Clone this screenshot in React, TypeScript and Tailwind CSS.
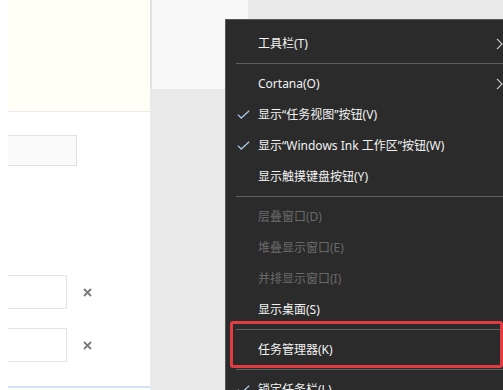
import React from "react";

const font = { fontFamily: '"Noto Sans", "Noto Sans CJK SC", sans-serif' };

function Check() {
  return (
    <svg width="13" height="9" viewBox="0 0 13 9" className="absolute left-[11px] top-[11px]">
      <polyline points="0.8,4.6 4.2,8 12.2,0.8" fill="none" stroke="#a9c7e6" strokeWidth="1.3" />
    </svg>
  );
}

function Chevron() {
  return (
    <svg width="7" height="12" viewBox="0 0 7 12" className="absolute left-[270px] top-[10px]">
      <polyline points="1,0.8 6,6 1,11.2" fill="none" stroke="#c8c8c8" strokeWidth="1.2" />
    </svg>
  );
}

function Row({ label, checked, sub, disabled }: { label: string; checked?: boolean; sub?: boolean; disabled?: boolean }) {
  return (
    <div className="relative h-[31px] flex items-center pl-[32px]">
      {checked && <Check />}
      <span className={`text-[12px] leading-none whitespace-nowrap ${disabled ? "text-[#6a6a6a]" : "text-[#f2f2f2]"}`}>{label}</span>
      {sub && <Chevron />}
    </div>
  );
}

function Sep() {
  return (
    <div className="h-[9px] flex items-center pl-[10px]">
      <div className="h-px w-full bg-[#5e5e5e]" />
    </div>
  );
}

function Cross() {
  return (
    <svg width="9" height="9" viewBox="0 0 9 9">
      <path d="M1 1 L8 8 M8 1 L1 8" stroke="#7a7a7a" strokeWidth="1.8" />
    </svg>
  );
}

export default function App() {
  return (
    <div className="relative w-[503px] h-[390px] overflow-hidden bg-white flex" style={font}>
      <div className="w-[8px] bg-white" />
      <div className="w-[142px] flex flex-col">
        <div className="h-[112px] bg-[#fffff6] border-b border-[#ececec]" />
        <div className="mt-[23px] h-[31px] w-[69px] bg-[#fafafa] border border-l-0 border-[#e2e2e2]" />
        <div className="mt-[109px] flex items-center">
          <div className="h-[34px] w-[59px] bg-white border border-l-0 border-[#e4e4e4]" />
          <div className="ml-[16px] flex"><Cross /></div>
        </div>
        <div className="mt-[19px] flex items-center">
          <div className="h-[34px] w-[59px] bg-white border border-l-0 border-[#e4e4e4]" />
          <div className="ml-[16px] flex"><Cross /></div>
        </div>
        <div className="mt-[24px] h-[2px] bg-[#d3e3f6]" />
      </div>
      <div className="flex-1 bg-[#e9e9e9]">
        <div className="w-[98px] h-[89px] bg-[#f8f8f8] border-l-2 border-[#e2e2e2]" />
      </div>

      <div className="absolute left-[225px] top-[19px] w-[300px] h-[400px] bg-[#2b2b2b] border-t border-l border-[#575757] pt-[8px]">
        <Row label="工具栏(T)" sub />
        <Sep />
        <Row label="Cortana(O)" sub />
        <Row label="显示“任务视图”按钮(V)" checked />
        <Row label="显示“Windows Ink 工作区”按钮(W)" checked />
        <Row label="显示触摸键盘按钮(Y)" />
        <Sep />
        <Row label="层叠窗口(D)" disabled />
        <Row label="堆叠显示窗口(E)" disabled />
        <Row label="并排显示窗口(I)" disabled />
        <Row label="显示桌面(S)" />
        <Sep />
        <Row label="任务管理器(K)" />
        <Sep />
        <Row label="锁定任务栏(L)" checked />
      </div>

      <div className="absolute left-[230px] top-[321px] w-[273px] h-[47px] border-[3px] border-[#e23c40] rounded-[3px]" />
    </div>
  );
}
